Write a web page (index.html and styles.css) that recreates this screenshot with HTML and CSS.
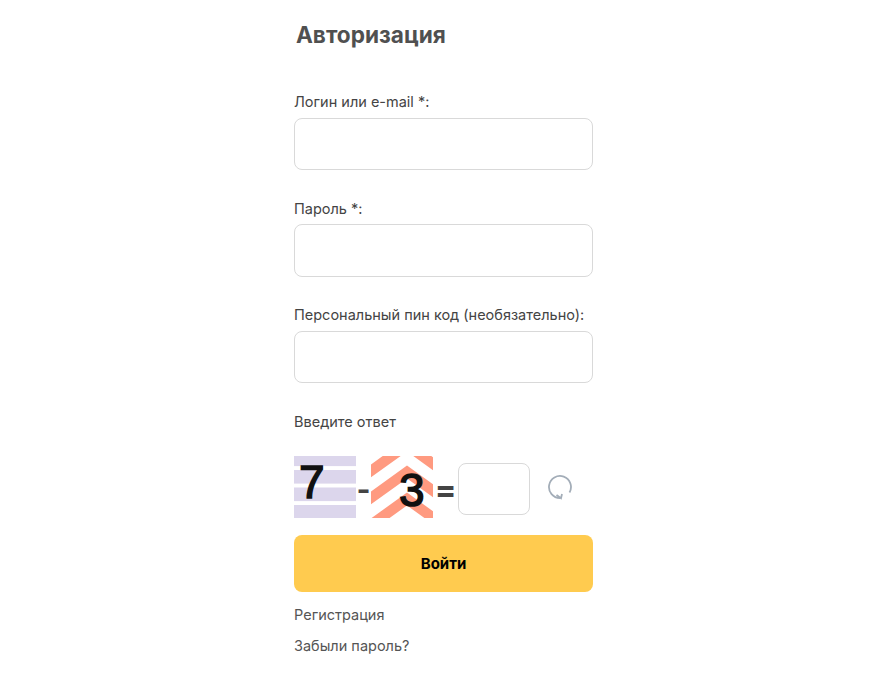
FILE: index.html
```html
<!DOCTYPE html>
<html lang="ru">
<head>
    <meta charset="UTF-8">
    <meta name="viewport" content="width=device-width, initial-scale=1.0">
    <title>Авторизация</title>
    <link rel="stylesheet" href="styles.css">
</head>
<body>
    <div class="login-box">
        <h1 class="login-title">Авторизация</h1>
        <form class="login-form">
            <div class="field">
                <label for="login">Логин или e-mail *:</label>
                <input type="text" id="login">
            </div>
            <div class="field">
                <label for="password">Пароль *:</label>
                <input type="password" id="password">
            </div>
            <div class="field">
                <label for="pin">Персональный пин код (необязательно):</label>
                <input type="text" id="pin">
            </div>
            <div class="captcha-label">Введите ответ</div>
            <div class="captcha">
                <div class="captcha-img captcha-stripes"><span class="digit digit-first">7</span></div>
                <span class="sign sign-minus">-</span>
                <div class="captcha-img">
                    <svg class="captcha-bg" width="62" height="62" viewBox="0 0 62 62" fill="none" stroke="#ff9a80" stroke-width="10.5">
                        <path d="M-10 22.1 L36 -11 L72 14.9"/>
                        <path d="M-10 49.1 L36 16 L72 41.9"/>
                        <path d="M-10 76.1 L36 43 L72 68.9"/>
                    </svg>
                    <span class="digit digit-second">3</span>
                </div>
                <span class="sign sign-equals">=</span>
                <input type="text" class="captcha-answer">
                <svg class="captcha-refresh" width="26" height="26" viewBox="0 0 26 26" fill="none" stroke="#a3adb8" stroke-width="1.8">
                    <path d="M13 24 A11 11 0 1 1 22.5 18.5"/>
                    <path d="M9.5 21 L14 24.3 L15 20"/>
                </svg>
            </div>
            <button type="button" class="login-button">Войти</button>
        </form>
        <a class="login-link" href="#">Регистрация</a>
        <a class="login-link" href="#">Забыли пароль?</a>
    </div>
</body>
</html>
```

FILE: styles.css
```css
body {
    margin: 0;
    background-color: #fff;
    color: #444;
    font-family: Inter, "Liberation Sans", sans-serif;
    font-size: 14.5px;
}
.login-box {
    width: 299px;
    margin-left: 294px;
}
.login-title {
    margin: 0 0 0 2px;
    padding-top: 21px;
    font-size: 22.6px;
    line-height: 28px;
    font-weight: 700;
    color: #505050;
}
.login-form {
    margin-top: 45px;
    margin-bottom: 13.5px;
}
.field {
    margin-bottom: 30.4px;
}
.field label {
    display: block;
    box-sizing: border-box;
    height: 18px;
    padding-top: 0.4px;
    line-height: 16px;
    margin-bottom: 5.7px;
}
.field input {
    display: block;
    box-sizing: border-box;
    width: 100%;
    height: 52.4px;
    border: 1px solid #d9d9d9;
    border-radius: 8px;
    background-color: #fff;
}
.captcha-label {
    height: 18px;
    padding-top: 0.8px;
    line-height: 16px;
}
.captcha {
    display: flex;
    align-items: center;
    margin-top: 24px;
    height: 62px;
}
.captcha-img {
    position: relative;
    width: 62px;
    height: 62px;
    overflow: hidden;
    flex-shrink: 0;
}
.captcha-stripes {
    background-image: linear-gradient(to bottom, #dcd6ec 0, #dcd6ec 14px, #fff 14px, #fff 17.5px);
    background-size: 100% 17.5px;
    background-position: 0 -3.5px;
}
.captcha-bg {
    display: block;
}
.digit {
    position: absolute;
    font-family: "Liberation Sans", sans-serif;
    font-size: 46px;
    line-height: 46px;
    color: #111;
    -webkit-text-stroke: 1.5px #111;
}
.digit-first {
    left: 5px;
    top: 3px;
}
.digit-second {
    left: 28px;
    top: 11px;
}
.sign {
    padding-top: 4px;
    font-size: 30px;
    font-weight: 700;
    color: #444;
    text-align: center;
}
.sign-minus {
    width: 15px;
}
.sign-equals {
    width: 25px;
    padding-right: 1px;
    margin-right: -1px;
    font-size: 32px;
}
.captcha-answer {
    box-sizing: border-box;
    width: 72px;
    height: 52px;
    margin-top: 4px;
    border: 1px solid #d9d9d9;
    border-radius: 8px;
    background-color: #fff;
}
.captcha-refresh {
    margin-left: 17px;
}
.login-button {
    display: block;
    width: 100%;
    height: 57px;
    margin-top: 17px;
    border: none;
    border-radius: 8px;
    background-color: #ffcb4f;
    color: #000;
    font-family: Inter, "Liberation Sans", sans-serif;
    font-size: 15px;
    font-weight: 700;
    cursor: pointer;
}
.login-link {
    display: block;
    margin-top: 13px;
    line-height: 18px;
    color: #555;
    text-decoration: none;
}
```
